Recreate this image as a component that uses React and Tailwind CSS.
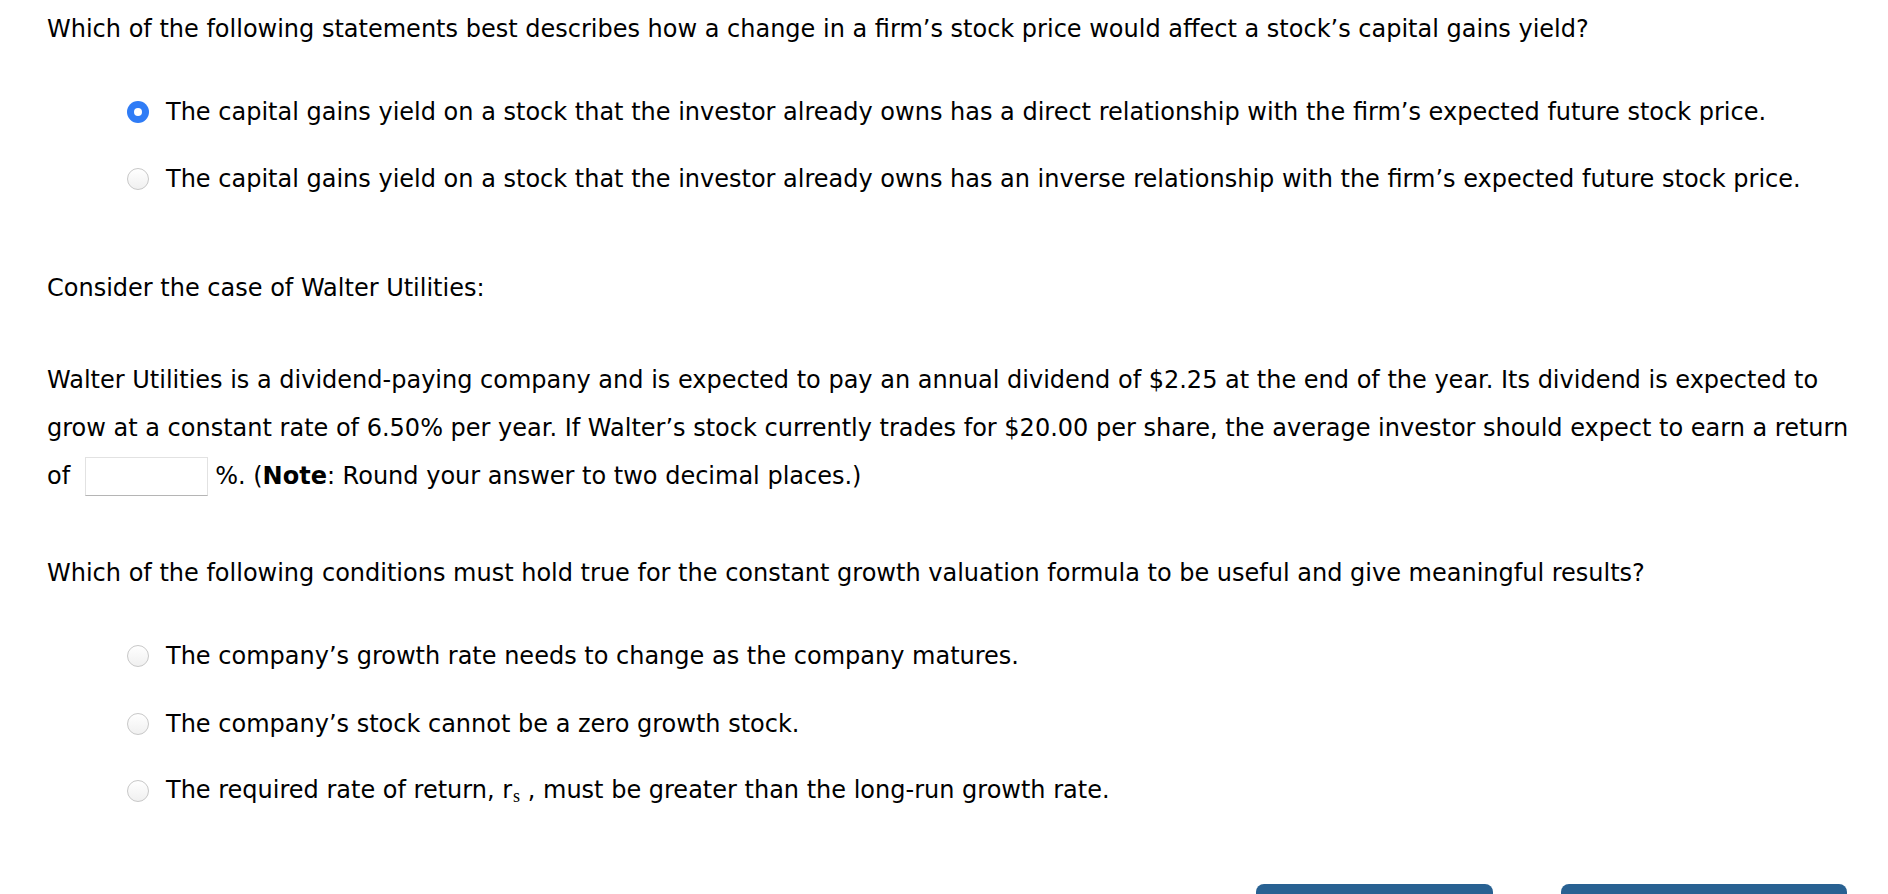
import React from "react";

function Radio({ checked }) {
  if (checked) {
    return (
      <span className="flex shrink-0 w-[22px] h-[22px] rounded-full bg-[#2f7cf6] items-center justify-center">
        <span className="block w-[8px] h-[8px] rounded-full bg-white" />
      </span>
    );
  }
  return (
    <span className="block shrink-0 w-[22px] h-[22px] rounded-full border border-[#c8c8c8] bg-gradient-to-b from-white to-[#f0f0f0]" />
  );
}

function Option({ checked, children, className = "" }) {
  return (
    <div className={"flex items-center h-[28px] pl-[80px] " + className}>
      <Radio checked={checked} />
      <span className="ml-[17px] whitespace-nowrap">{children}</span>
    </div>
  );
}

export default function App() {
  return (
    <div
      className="w-[1888px] h-[894px] overflow-hidden bg-white text-black text-[24px] leading-[28px] pl-[47px]"
      style={{ fontFamily: '"DejaVu Sans", Verdana, sans-serif' }}
    >
      <div className="pt-[15px] whitespace-nowrap">
        Which of the following statements best describes how a change in a firm’s stock price would affect a stock’s capital gains yield?
      </div>

      <Option checked className="mt-[55px]">
        The capital gains yield on a stock that the investor already owns has a direct relationship with the firm’s expected future stock price.
      </Option>
      <Option className="mt-[39px]">
        The capital gains yield on a stock that the investor already owns has an inverse relationship with the firm’s expected future stock price.
      </Option>

      <div className="mt-[81px] whitespace-nowrap">Consider the case of Walter Utilities:</div>

      <div className="mt-[54px] leading-[48px]">
        <div className="whitespace-nowrap">
          Walter Utilities is a dividend-paying company and is expected to pay an annual dividend of $2.25 at the end of the year. Its dividend is expected to
        </div>
        <div className="whitespace-nowrap">
          grow at a constant rate of 6.50% per year. If Walter’s stock currently trades for $20.00 per share, the average investor should expect to earn a return
        </div>
        <div className="whitespace-nowrap flex items-center h-[48px]">
          <span>of</span>
          <span className="block ml-[15px] mr-[7px] w-[123px] h-[39px] border border-[#e2e2e2] border-b-[#b5b5b5] bg-white" />
          <span>
            %. (<b>Note</b>: Round your answer to two decimal places.)
          </span>
        </div>
      </div>

      <div className="mt-[59px] whitespace-nowrap">
        Which of the following conditions must hold true for the constant growth valuation formula to be useful and give meaningful results?
      </div>

      <Option className="mt-[55px]">The company’s growth rate needs to change as the company matures.</Option>
      <Option className="mt-[40px]">The company’s stock cannot be a zero growth stock.</Option>
      <Option className="mt-[39px]">
        The required rate of return, r
        <span className="text-[18px] relative top-[4px] ml-[1px]" style={{ fontFamily: '"Liberation Serif", serif' }}>
          s
        </span>
        {" "}, must be greater than the long-run growth rate.
      </Option>

      <div className="mt-[79px] flex justify-end pr-[41px] gap-[68px]">
        <div className="w-[237px] h-[48px] rounded-t-[8px] bg-[#286192]" />
        <div className="w-[286px] h-[48px] rounded-t-[8px] bg-[#286192]" />
      </div>
    </div>
  );
}
